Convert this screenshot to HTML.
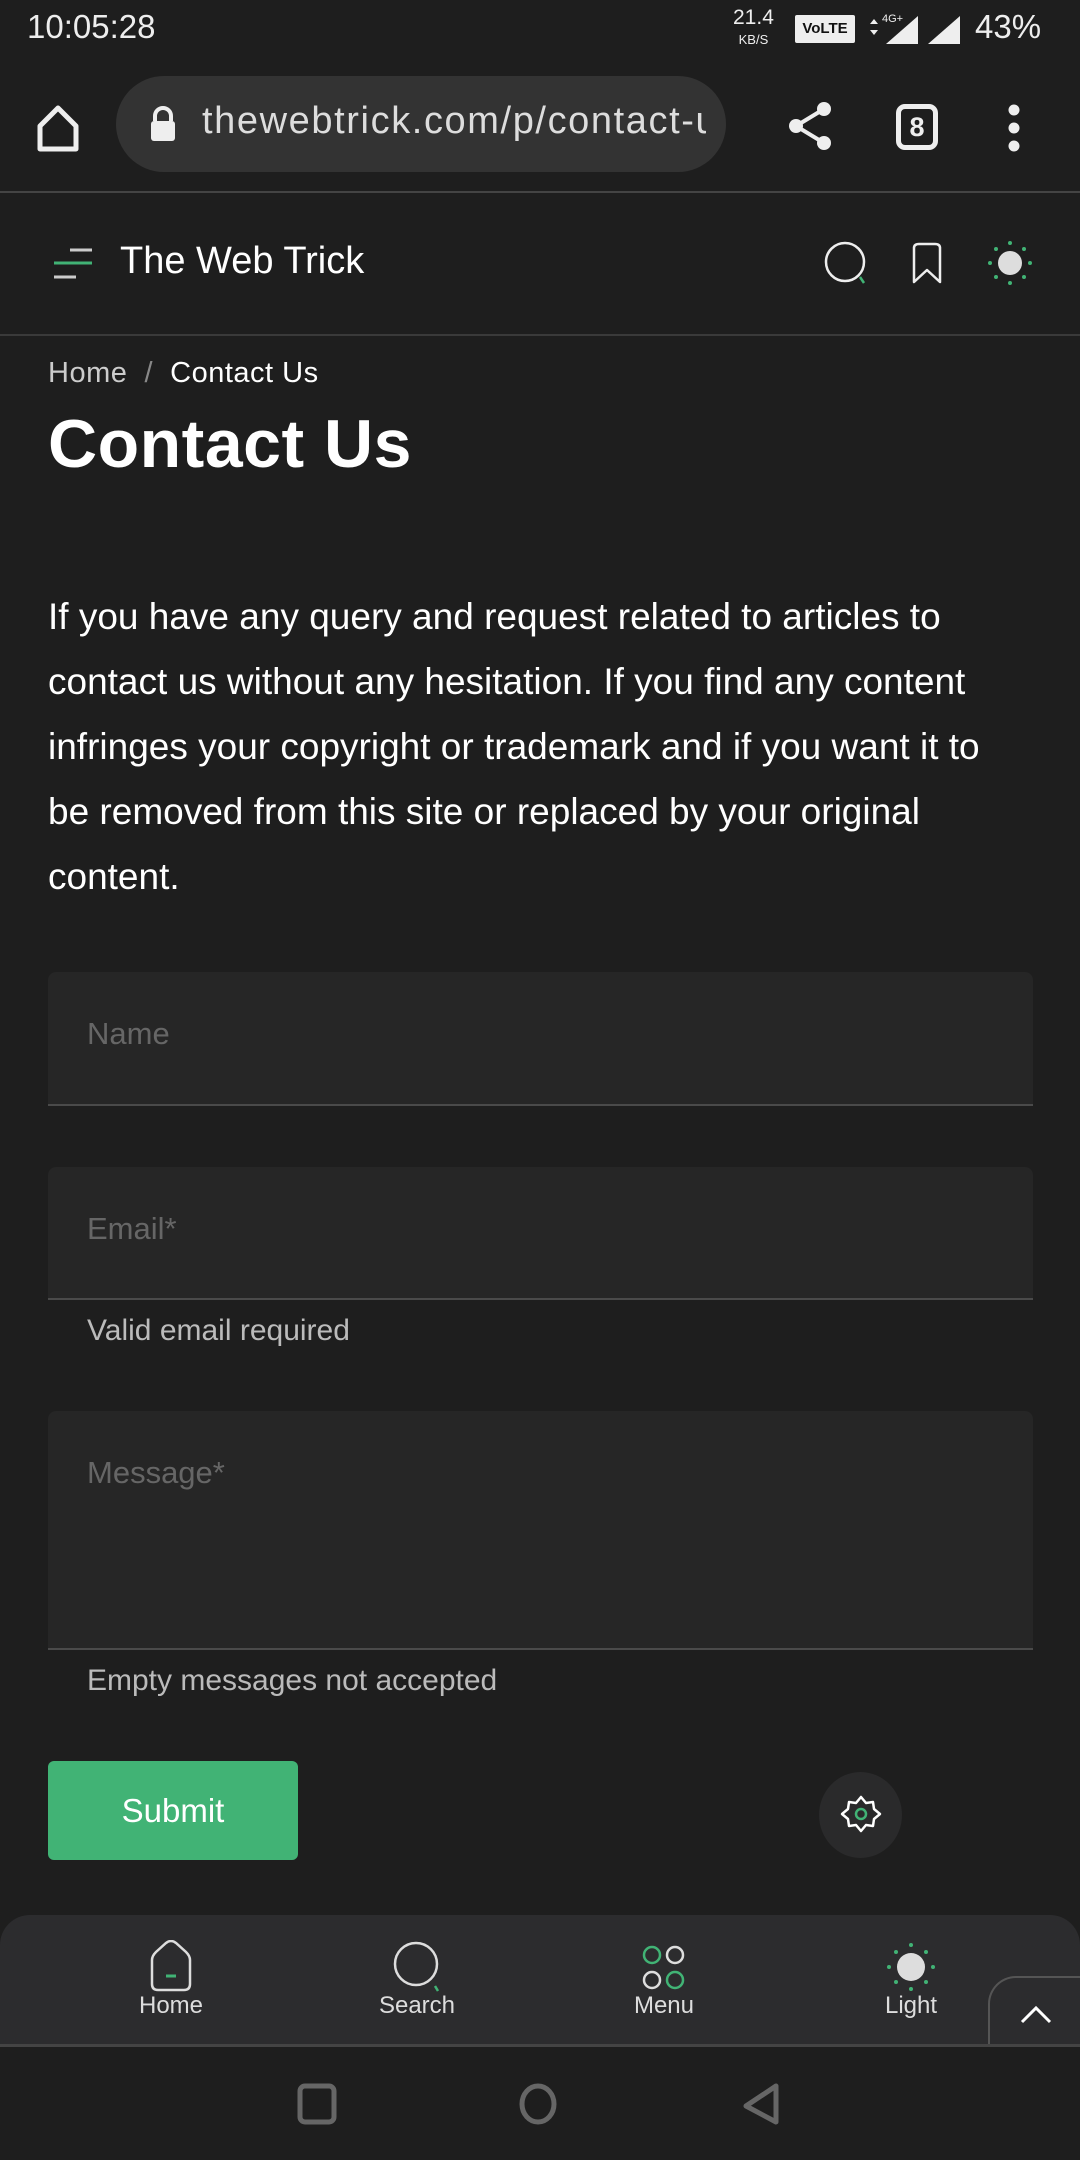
<!DOCTYPE html>
<html><head><meta charset="utf-8"><style>
*{margin:0;padding:0;box-sizing:border-box}
body{width:1080px;height:2160px;background:#1e1e1e;color:#fff;font-family:"Liberation Sans",sans-serif;position:relative;overflow:hidden}
.a{position:absolute}
.field{position:absolute;left:48px;width:985px;background:#262626;border-radius:8px 8px 0 0;border-bottom:2px solid #4a4a4a}
.ph{position:absolute;left:39px;color:#666;font-size:31px}
.help{position:absolute;left:87px;color:#bbb;font-size:30px}
.nl{position:absolute;top:1992px;font-size:24px;color:#ddd;width:200px;text-align:center}
</style></head><body>
<!-- status bar -->
<div class="a" style="left:27px;top:8px;font-size:33px;color:#eee">10:05:28</div>
<div class="a" style="left:733px;top:8px;font-size:21px;color:#eee;line-height:20px;text-align:center">21.4<br><span style="font-size:13px">KB/S</span></div>
<div class="a" style="left:795px;top:15px;width:60px;height:28px;background:#eee;color:#111;font-size:15px;font-weight:bold;text-align:center;line-height:28px;border-radius:2px">VoLTE</div>
<svg class="a" style="left:866px;top:12px" width="110" height="34"><path d="M4 12l4-5 4 5zM4 18l4 5 4-5z" fill="#eee"/><text x="16" y="10" font-size="11" fill="#eee" font-family="Liberation Sans">4G+</text><path d="M20 32L52 4V32Z" fill="#eee"/><path d="M62 32L94 4V32Z" fill="#eee"/></svg>
<div class="a" style="left:975px;top:8px;font-size:33px;color:#eee">43%</div>
<!-- toolbar -->
<svg class="a" style="left:34px;top:104px" width="48" height="50"><path d="M6 22L24 4L42 22V45H6Z" fill="none" stroke="#eee" stroke-width="5" stroke-linejoin="round"/></svg>
<div class="a" style="left:116px;top:76px;width:610px;height:96px;border-radius:48px;background:#333"></div>
<svg class="a" style="left:148px;top:105px" width="30" height="40"><path d="M7 16V11a8 8 0 0116 0v5" stroke="#eee" stroke-width="4" fill="none"/><rect x="3" y="16" width="24" height="20" rx="3" fill="#eee"/></svg>
<div class="a" style="left:202px;top:100px;width:504px;overflow:hidden;white-space:nowrap;font-size:38px;letter-spacing:1.6px;color:#ddd">thewebtrick.com/p/contact-us</div>
<svg class="a" style="left:786px;top:100px" width="48" height="52"><circle cx="38" cy="9" r="7" fill="#eee"/><circle cx="10" cy="26" r="7" fill="#eee"/><circle cx="38" cy="43" r="7" fill="#eee"/><path d="M38 9L10 26L38 43" stroke="#eee" stroke-width="4" fill="none"/></svg>
<div class="a" style="left:896px;top:104px;width:42px;height:46px;border:5px solid #eee;border-radius:9px;font-size:27px;font-weight:bold;text-align:center;line-height:36px;color:#eee">8</div>
<svg class="a" style="left:1000px;top:104px" width="28" height="48"><circle cx="14" cy="6" r="5.5" fill="#eee"/><circle cx="14" cy="24" r="5.5" fill="#eee"/><circle cx="14" cy="42" r="5.5" fill="#eee"/></svg>
<div class="a" style="left:0;top:191px;width:1080px;height:2px;background:#444"></div>
<!-- header -->
<svg class="a" style="left:50px;top:246px" width="44" height="36"><path d="M20 4H42M4 17H42M4 31H26" stroke="#ccc" stroke-width="3"/><path d="M4 17H42" stroke="#41b375" stroke-width="3"/></svg>
<div class="a" style="left:120px;top:240px;font-size:38px;color:#fff">The Web Trick</div>
<svg class="a" style="left:822px;top:238px" width="50" height="50"><circle cx="23" cy="24" r="19" fill="none" stroke="#eee" stroke-width="2.5"/><path d="M38 39l4 6" stroke="#41b375" stroke-width="2.5"/></svg>
<svg class="a" style="left:910px;top:240px" width="34" height="46"><path d="M4 8Q4 4 9 4H25Q30 4 30 8V42L17 30L4 42Z" fill="none" stroke="#eee" stroke-width="2.5" stroke-linejoin="round"/></svg>
<svg class="a" style="left:987px;top:240px" width="46" height="46"><circle cx="23" cy="23" r="12" fill="#ddd"/><g fill="#41b375"><circle cx="23" cy="3" r="2"/><circle cx="23" cy="43" r="2"/><circle cx="3" cy="23" r="2"/><circle cx="43" cy="23" r="2"/><circle cx="9" cy="9" r="2"/><circle cx="37" cy="9" r="2"/><circle cx="9" cy="37" r="2"/><circle cx="37" cy="37" r="2"/></g></svg>
<div class="a" style="left:0;top:334px;width:1080px;height:2px;background:#3a3a3a"></div>
<!-- content -->
<div class="a" style="left:48px;top:357px;font-size:29px;letter-spacing:0.5px;color:#ccc">Home&nbsp;&nbsp;<span style="color:#888">/</span>&nbsp;&nbsp;<span style="color:#fff">Contact Us</span></div>
<div class="a" style="left:48px;top:405px;font-size:68px;letter-spacing:0.5px;font-weight:bold;color:#fff">Contact Us</div>
<div class="a" style="left:48px;top:584px;width:1030px;font-size:37px;line-height:65px;color:#fff;white-space:nowrap">If you have any query and request related to articles to<br>contact us without any hesitation. If you find any content<br>infringes your copyright or trademark and if you want it to<br>be removed from this site or replaced by your original<br>content.</div>
<div class="field" style="top:972px;height:134px"><div class="ph" style="top:44px">Name</div></div>
<div class="field" style="top:1167px;height:133px"><div class="ph" style="top:44px">Email*</div></div>
<div class="help" style="top:1314px">Valid email required</div>
<div class="field" style="top:1411px;height:239px"><div class="ph" style="top:44px">Message*</div></div>
<div class="help" style="top:1664px">Empty messages not accepted</div>
<div class="a" style="left:48px;top:1761px;width:250px;height:99px;background:#41b375;border-radius:6px;font-size:33px;text-align:center;line-height:99px;color:#fff">Submit</div>
<div class="a" style="left:819px;top:1772px;width:83px;height:86px;border-radius:50%;background:#2a2a2b"></div>
<svg class="a" style="left:840px;top:1793px" width="42" height="42"><path d="M21 4l5 6 7-1 1 7 6 5-6 5-1 7-7-1-5 6-5-6-7 1-1-7-6-5 6-5 1-7 7 1z" fill="none" stroke="#fff" stroke-width="2.5" stroke-linejoin="round"/><circle cx="21" cy="21" r="5" fill="none" stroke="#41b375" stroke-width="2.5"/></svg>
<!-- bottom nav -->
<div class="a" style="left:0;top:1915px;width:1080px;height:129px;background:#2c2c2e;border-radius:30px 30px 0 0"></div>
<svg class="a" style="left:148px;top:1940px" width="46" height="56"><path d="M4 20Q4 16 8 12L18 3Q23 -1 28 3L38 12Q42 16 42 20V44Q42 50 36 50H10Q4 50 4 44Z" fill="none" stroke="#ddd" stroke-width="2.5"/><path d="M18 36H28" stroke="#41b375" stroke-width="3"/></svg>
<div class="nl" style="left:71px">Home</div>
<svg class="a" style="left:392px;top:1940px" width="52" height="56"><circle cx="24" cy="24" r="21" fill="none" stroke="#ddd" stroke-width="2.5"/><path d="M43 46l3 5" stroke="#41b375" stroke-width="2.5"/></svg>
<div class="nl" style="left:317px">Search</div>
<svg class="a" style="left:640px;top:1944px" width="48" height="48"><circle cx="12" cy="11" r="8" fill="none" stroke="#41b375" stroke-width="2.5"/><circle cx="35" cy="11" r="8" fill="none" stroke="#ddd" stroke-width="2.5"/><circle cx="12" cy="36" r="8" fill="none" stroke="#ddd" stroke-width="2.5"/><circle cx="35" cy="36" r="8" fill="none" stroke="#41b375" stroke-width="2.5"/></svg>
<div class="nl" style="left:564px">Menu</div>
<svg class="a" style="left:886px;top:1942px" width="50" height="50"><circle cx="25" cy="25" r="14" fill="#ddd"/><g fill="#41b375"><circle cx="25" cy="3" r="2"/><circle cx="25" cy="47" r="2"/><circle cx="3" cy="25" r="2"/><circle cx="47" cy="25" r="2"/><circle cx="10" cy="10" r="2"/><circle cx="40" cy="10" r="2"/><circle cx="10" cy="40" r="2"/><circle cx="40" cy="40" r="2"/></g></svg>
<div class="nl" style="left:811px">Light</div>
<div class="a" style="left:988px;top:1976px;width:120px;height:70px;border:2px solid #555;border-right:none;border-bottom:none;border-radius:28px 0 0 0;background:#2c2c2e"></div>
<svg class="a" style="left:1018px;top:2002px" width="36" height="24"><path d="M4 20L18 6L32 20" fill="none" stroke="#fff" stroke-width="3"/></svg>
<div class="a" style="left:0;top:2044px;width:1080px;height:3px;background:#444"></div>
<!-- system nav -->
<svg class="a" style="left:296px;top:2082px" width="44" height="44"><rect x="4" y="4" width="34" height="36" rx="5" fill="none" stroke="#666" stroke-width="5"/></svg>
<svg class="a" style="left:516px;top:2082px" width="44" height="44"><ellipse cx="22" cy="22" rx="16" ry="18" fill="none" stroke="#666" stroke-width="5"/></svg>
<svg class="a" style="left:740px;top:2082px" width="44" height="44"><path d="M36 4V40L6 24Z" fill="none" stroke="#666" stroke-width="5" stroke-linejoin="round"/></svg>
</body></html>
